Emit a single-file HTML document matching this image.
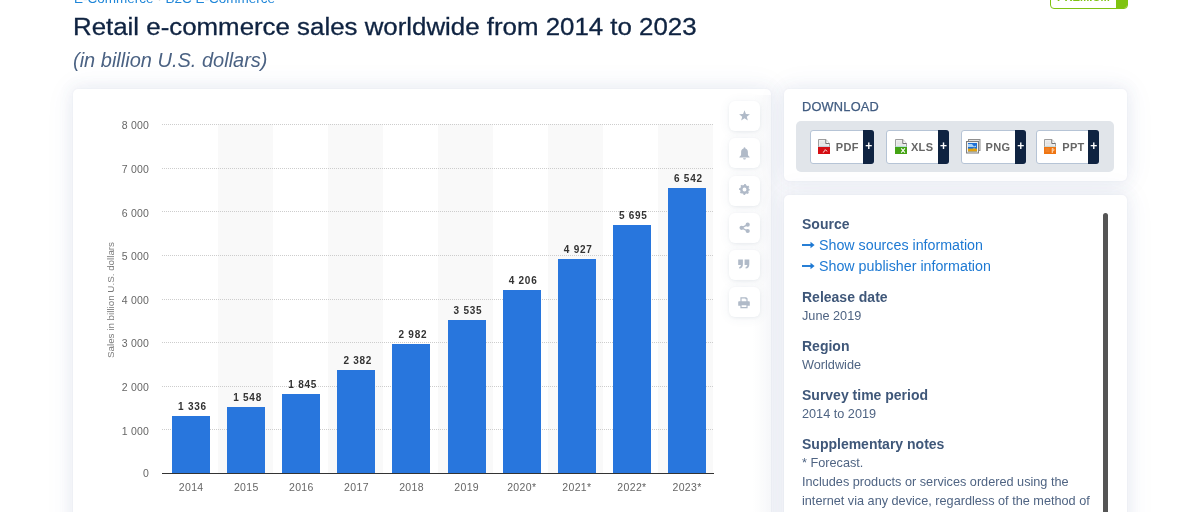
<!DOCTYPE html>
<html><head><meta charset="utf-8">
<style>
*{margin:0;padding:0;box-sizing:border-box}
html,body{width:1200px;height:512px;overflow:hidden;background:#fff;font-family:"Liberation Sans",sans-serif}
.abs{position:absolute}
#root{position:absolute;left:0;top:0;width:1200px;height:512px;background:#fff;filter:opacity(0.999)}
#crumb{left:74px;top:-9px;font-size:13.5px;color:#1f86d8;white-space:nowrap}
#title{left:73px;top:14px;font-size:23px;-webkit-text-stroke:0.3px #0f2341;transform:scaleX(1.124);transform-origin:0 0;color:#0f2341;white-space:nowrap}
#sub{left:73px;top:49px;font-size:20px;font-style:italic;color:#4b6283;white-space:nowrap}
.card{position:absolute;background:#fff;border-radius:5px;box-shadow:0 0 2px rgba(50,70,110,0.06),0 0 14px 3px rgba(60,90,150,0.065),0 0 30px 2px rgba(60,90,150,0.06)}
#chart{left:73px;top:89px;width:698px;height:460px}
#dl{left:784px;top:89px;width:343px;height:92px}
#info{left:784px;top:195px;width:343px;height:360px}
.col{position:absolute;top:124px;height:349px;width:55.1px;background:#f9f9f9}
.grid{position:absolute;left:162px;width:552px;height:1px;background-image:linear-gradient(to right,#cdcdcd 50%,transparent 50%);background-size:2px 1px}
.ylab{position:absolute;left:100px;width:49.2px;text-align:right;font-size:10.5px;color:#666;line-height:12px;letter-spacing:0.25px}
.xlab{position:absolute;top:481px;width:60px;text-align:center;font-size:10.5px;color:#666;letter-spacing:0.35px;padding-left:0.35px}
.bar{position:absolute;width:38px;background:#2876dd}
.val{position:absolute;width:60px;text-align:center;font-size:10px;font-weight:bold;color:#333;letter-spacing:0.75px}
#axis{left:162px;top:473px;width:552px;height:1px;background:#333}
#ytitle{left:109.5px;top:299.5px;font-size:9.8px;color:#7a7a7a;white-space:nowrap;transform:translate(-50%,-50%) rotate(-90deg)}
.btn{position:absolute;left:729px;width:31px;height:30px;background:#fff;border-radius:6px;box-shadow:0 1px 3px rgba(60,80,120,0.07),0 1px 12px rgba(60,80,120,0.07)}
#rstrip{left:752px;top:95px;width:19px;height:417px;background:linear-gradient(to right,rgba(60,80,120,0),rgba(60,80,120,0.035))}
.btn svg{position:absolute}
#dltitle{left:802px;top:99px;font-size:12.8px;color:#415c81;letter-spacing:0.2px;-webkit-text-stroke:0.25px #415c81}
#dlbox{left:796px;top:121px;width:318px;height:51px;background:#e1e5ea;border-radius:5px}
.fb{position:absolute;top:129.7px;height:34px;background:#fff;border:1px solid #b6c4d6;border-radius:3px}
.fb .dk{position:absolute;right:-1px;top:-1px;bottom:-1px;background:#0f2341;color:#fff;font-weight:bold;font-size:12px;text-align:center;line-height:33px;border-radius:0 3px 3px 0}
.fb .t{position:absolute;top:10.2px;font-size:11px;line-height:12px;font-weight:bold;color:#666;letter-spacing:0.3px}
.fb .ic{position:absolute;top:8.3px;line-height:0}
.h{position:absolute;left:802px;font-size:14px;font-weight:bold;color:#3f5779;white-space:nowrap}
.v{position:absolute;left:802px;font-size:12.7px;color:#4f6483;white-space:nowrap}
.lnk{position:absolute;left:802px;font-size:14.25px;color:#1d79d3;white-space:nowrap}
#scroll{left:1103px;top:213px;width:5px;height:320px;background:#555;border-radius:3px}
#prem{left:1050px;top:-22px;width:78px;height:30.8px;border:1.6px solid #7fc311;border-radius:4px;background:#fff;overflow:hidden}
#prem .pt{position:absolute;left:6px;top:12.3px;font-size:11.2px;font-weight:bold;color:#7fc311;letter-spacing:0px}
#prem .g{position:absolute;right:0;top:0;bottom:0;width:11.5px;background:#7fc311}
</style></head><body><div id="root">
<div id="crumb" class="abs">E-Commerce <span style="color:#999">·</span> B2C E-Commerce</div>
<div id="prem" class="abs"><span class="pt">PREMIUM</span><div class="g"></div></div>
<div id="title" class="abs">Retail e-commerce sales worldwide from 2014 to 2023</div>
<div id="sub" class="abs">(in billion U.S. dollars)</div>

<div id="chart" class="card"></div>
<div id="dl" class="card"></div>
<div id="info" class="card"></div>
<div id="rstrip" class="abs"></div>

<div id="plot">
<div class="col" style="left:217.50px"></div>
<div class="col" style="left:327.70px"></div>
<div class="col" style="left:437.90px"></div>
<div class="col" style="left:548.10px"></div>
<div class="col" style="left:658.30px"></div>
<div class="ylab" style="top:467.40px">0</div>
<div class="grid" style="top:429px"></div>
<div class="ylab" style="top:424.68px">1 000</div>
<div class="grid" style="top:386px"></div>
<div class="ylab" style="top:381.06px">2 000</div>
<div class="grid" style="top:342px"></div>
<div class="ylab" style="top:337.43px">3 000</div>
<div class="grid" style="top:299px"></div>
<div class="ylab" style="top:293.81px">4 000</div>
<div class="grid" style="top:255px"></div>
<div class="ylab" style="top:250.19px">5 000</div>
<div class="grid" style="top:211px"></div>
<div class="ylab" style="top:206.57px">6 000</div>
<div class="grid" style="top:168px"></div>
<div class="ylab" style="top:162.94px">7 000</div>
<div class="grid" style="top:124px"></div>
<div class="ylab" style="top:119.32px">8 000</div>
<div class="bar" style="left:172.00px;top:415.82px;height:57.18px"></div>
<div class="val" style="left:162.50px;top:400.82px">1 336</div>
<div class="xlab" style="left:161.00px">2014</div>
<div class="bar" style="left:227.10px;top:406.55px;height:66.45px"></div>
<div class="val" style="left:217.60px;top:391.55px">1 548</div>
<div class="xlab" style="left:216.10px">2015</div>
<div class="bar" style="left:282.20px;top:393.57px;height:79.43px"></div>
<div class="val" style="left:272.70px;top:378.57px">1 845</div>
<div class="xlab" style="left:271.20px">2016</div>
<div class="bar" style="left:337.30px;top:370.11px;height:102.89px"></div>
<div class="val" style="left:327.80px;top:355.11px">2 382</div>
<div class="xlab" style="left:326.30px">2017</div>
<div class="bar" style="left:392.40px;top:343.89px;height:129.11px"></div>
<div class="val" style="left:382.90px;top:328.89px">2 982</div>
<div class="xlab" style="left:381.40px">2018</div>
<div class="bar" style="left:447.50px;top:319.72px;height:153.28px"></div>
<div class="val" style="left:438.00px;top:304.72px">3 535</div>
<div class="xlab" style="left:436.50px">2019</div>
<div class="bar" style="left:502.60px;top:290.40px;height:182.60px"></div>
<div class="val" style="left:493.10px;top:275.40px">4 206</div>
<div class="xlab" style="left:491.60px">2020*</div>
<div class="bar" style="left:557.70px;top:258.89px;height:214.11px"></div>
<div class="val" style="left:548.20px;top:243.89px">4 927</div>
<div class="xlab" style="left:546.70px">2021*</div>
<div class="bar" style="left:612.80px;top:225.33px;height:247.67px"></div>
<div class="val" style="left:603.30px;top:210.33px">5 695</div>
<div class="xlab" style="left:601.80px">2022*</div>
<div class="bar" style="left:667.90px;top:188.31px;height:284.69px"></div>
<div class="val" style="left:658.40px;top:173.31px">6 542</div>
<div class="xlab" style="left:656.90px">2023*</div>
<div id="axis" class="abs"></div>
</div>

<div id="ytitle" class="abs">Sales in billion U.S. dollars</div>

<div class="btn" style="top:101px"><svg style="left:9.5px;top:8.5px" width="11" height="11" viewBox="0 0 11 11"><path fill="#b0bac8" d="M5.50 0.20 L6.91 3.96 L10.92 4.14 L7.78 6.64 L8.85 10.51 L5.50 8.30 L2.15 10.51 L3.22 6.64 L0.08 4.14 L4.09 3.96Z"/></svg></div>
<div class="btn" style="top:138px"><svg style="left:9.5px;top:8.5px" width="11" height="13" viewBox="0 0 11 13"><path fill="#b0bac8" d="M5.5 0.3C6 0.3 6.4 0.7 6.4 1.2V1.5C8 1.9 8.9 3.3 8.9 5.2V7.6C8.9 8.4 9.5 9.1 10.6 10V10.6H0.4V10C1.5 9.1 2.1 8.4 2.1 7.6V5.2C2.1 3.3 3 1.9 4.6 1.5V1.2C4.6 0.7 5 0.3 5.5 0.3ZM4.1 11.3H6.9C6.9 12.1 6.3 12.6 5.5 12.6 4.7 12.6 4.1 12.1 4.1 11.3Z"/></svg></div>
<div class="btn" style="top:175.5px"><svg style="left:9.5px;top:8.5px" width="11" height="11" viewBox="0 0 11 11"><circle cx="5.5" cy="5.5" r="3.2" fill="none" stroke="#b0bac8" stroke-width="2.5"/><circle cx="5.5" cy="5.5" r="4.4" fill="none" stroke="#b0bac8" stroke-width="2" stroke-dasharray="1.75 1.705" stroke-dashoffset="0.87"/></svg></div>
<div class="btn" style="top:213px"><svg style="left:9.5px;top:8.5px" width="11" height="12" viewBox="0 0 11 12"><g fill="#b0bac8"><circle cx="8.7" cy="2.7" r="2.1"/><circle cx="8.7" cy="9" r="2.1"/><circle cx="2.6" cy="5.85" r="2.1"/></g><path d="M2.5 5.8 8.7 2.6M2.5 5.8 8.7 9" stroke="#b0bac8" stroke-width="1.4"/></svg></div>
<div class="btn" style="top:250px"><svg style="left:9px;top:9px" width="12" height="10" viewBox="0 0 12 10"><path fill="#b0bac8" d="M0.2 0.5H4.9V5.2C4.9 7.8 3.9 9.2 1.2 9.6V8.1C2.4 7.8 2.9 7.2 2.9 6.1H0.2ZM6.6 0.5H11.3V5.2C11.3 7.8 10.3 9.2 7.6 9.6V8.1C8.8 7.8 9.3 7.2 9.3 6.1H6.6Z"/></svg></div>
<div class="btn" style="top:287px"><svg style="left:9px;top:9.5px" width="12" height="12" viewBox="0 0 12 12"><path fill="#b0bac8" fill-rule="evenodd" d="M2.4 0.2H8.2L9.6 1.6V4.3H10.8C11.4 4.3 11.8 4.7 11.8 5.3V8.8H9.6V11.2H2.4V8.8H0.2V5.3C0.2 4.7 0.6 4.3 1.2 4.3H2.4ZM3.6 1.4V4.3H8.4V2.2H7.4V1.4ZM3.6 8.2V10H8.4V8.2Z"/></svg></div>

<div id="dltitle" class="abs">DOWNLOAD</div>
<div id="dlbox" class="abs"></div>

<div class="fb" style="left:810.3px;width:64.0px"><div class="ic" style="left:6.7px"><svg width="12.2" height="15" viewBox="0 0 13 15" preserveAspectRatio="none"><path d="M0.5 0.5H8.3L12.3 4.5V14.5H0.5Z" fill="#efefef" stroke="#9a9a9a"/><path d="M2 3H7M2 4.6H10M2 6.2H10" stroke="#dcdcdc" stroke-width="0.8"/><path d="M8.3 0.5V4.5H12.3" fill="#fff" stroke="#6f6f6f"/><rect x="0.5" y="7" width="11.8" height="0.9" fill="#bfe6f2"/><rect x="0" y="7.9" width="12.8" height="7.1" fill="#d50d12"/><path d="M5.6 13.6 7.3 11.3M7.6 10.4 9.6 12.4" stroke="#fff" stroke-width="1" fill="none"/></svg></div><span class="t" style="left:24.5px">PDF</span><div class="dk" style="width:11.3px">+</div></div>
<div class="fb" style="left:886.2px;width:62.9px"><div class="ic" style="left:7.4px"><svg width="12.2" height="15" viewBox="0 0 13 15" preserveAspectRatio="none"><path d="M0.5 0.5H8.3L12.3 4.5V14.5H0.5Z" fill="#efefef" stroke="#9a9a9a"/><path d="M2 3H7M2 4.6H10M2 6.2H10" stroke="#dcdcdc" stroke-width="0.8"/><path d="M8.3 0.5V4.5H12.3" fill="#fff" stroke="#6f6f6f"/><rect x="0.5" y="7" width="11.8" height="0.9" fill="#bfe6f2"/><rect x="0" y="7.9" width="12.8" height="7.1" fill="#44a314"/><path d="M6.6 9.3 10.6 13.6M10.6 9.3 6.6 13.6" stroke="#fff" stroke-width="1.2"/></svg></div><span class="t" style="left:23.8px">XLS</span><div class="dk" style="width:11.2px">+</div></div>
<div class="fb" style="left:961.3px;width:65.2px"><div class="ic" style="left:3.5px"><svg width="15" height="15" viewBox="0 0 15 15"><rect x="2.5" y="0.5" width="11.5" height="11" fill="#e2e2e2" stroke="#8f8f8f"/><rect x="0.5" y="2.5" width="12" height="11.5" fill="#f0f0f0" stroke="#7d7d7d"/><rect x="2" y="4" width="9" height="8.5" fill="#1d6fd6"/><path d="M2 5H6L8 7.5 10 6.5V8H2Z" fill="#a9d2f5"/><rect x="2" y="9.6" width="9" height="2.9" fill="#e2a20f"/><path d="M6.5 9.6 8.2 8.4 9.5 9.6Z" fill="#f2c64a"/></svg></div><span class="t" style="left:23.3px">PNG</span><div class="dk" style="width:11.3px">+</div></div>
<div class="fb" style="left:1036.2px;width:63.3px"><div class="ic" style="left:6.6px"><svg width="12.2" height="15" viewBox="0 0 13 15" preserveAspectRatio="none"><path d="M0.5 0.5H8.3L12.3 4.5V14.5H0.5Z" fill="#efefef" stroke="#9a9a9a"/><path d="M2 3H7M2 4.6H10M2 6.2H10" stroke="#dcdcdc" stroke-width="0.8"/><path d="M8.3 0.5V4.5H12.3" fill="#fff" stroke="#6f6f6f"/><rect x="0.5" y="7" width="11.8" height="0.9" fill="#bfe6f2"/><rect x="0" y="7.9" width="12.8" height="7.1" fill="#ef7512"/><path d="M8.8 9.4v4.6M8.8 9.6C10.2 9.6 10.6 10.2 10.6 10.9 10.6 11.6 10 12 8.8 12" stroke="#ffe2c2" stroke-width="1" fill="none"/><path d="M1.5 10H6M1.5 12H6" stroke="#f59a50" stroke-width="0.7"/></svg></div><span class="t" style="left:25.1px">PPT</span><div class="dk" style="width:11.5px">+</div></div>

<div class="h" style="top:216px">Source</div>
<div class="lnk" style="top:237px"><svg width="13" height="8" viewBox="0 0 13 8" style="position:relative;top:-1px;margin-right:4px"><path d="M0 4H10" stroke="#1d79d3" stroke-width="1.9"/><path d="M8.5 0.8 12.6 4 8.5 7.2Z" fill="#1d79d3"/></svg>Show sources information</div>
<div class="lnk" style="top:258px"><svg width="13" height="8" viewBox="0 0 13 8" style="position:relative;top:-1px;margin-right:4px"><path d="M0 4H10" stroke="#1d79d3" stroke-width="1.9"/><path d="M8.5 0.8 12.6 4 8.5 7.2Z" fill="#1d79d3"/></svg>Show publisher information</div>
<div class="h" style="top:289px">Release date</div>
<div class="v" style="top:309px">June 2019</div>
<div class="h" style="top:338px">Region</div>
<div class="v" style="top:358px">Worldwide</div>
<div class="h" style="top:387px">Survey time period</div>
<div class="v" style="top:407px">2014 to 2019</div>
<div class="h" style="top:436px">Supplementary notes</div>
<div class="v" style="top:456px">* Forecast.</div>
<div class="v" style="top:475px">Includes products or services ordered using the</div>
<div class="v" style="top:494px">internet via any device, regardless of the method of</div>
<div id="scroll" class="abs"></div>
</div></body></html>
